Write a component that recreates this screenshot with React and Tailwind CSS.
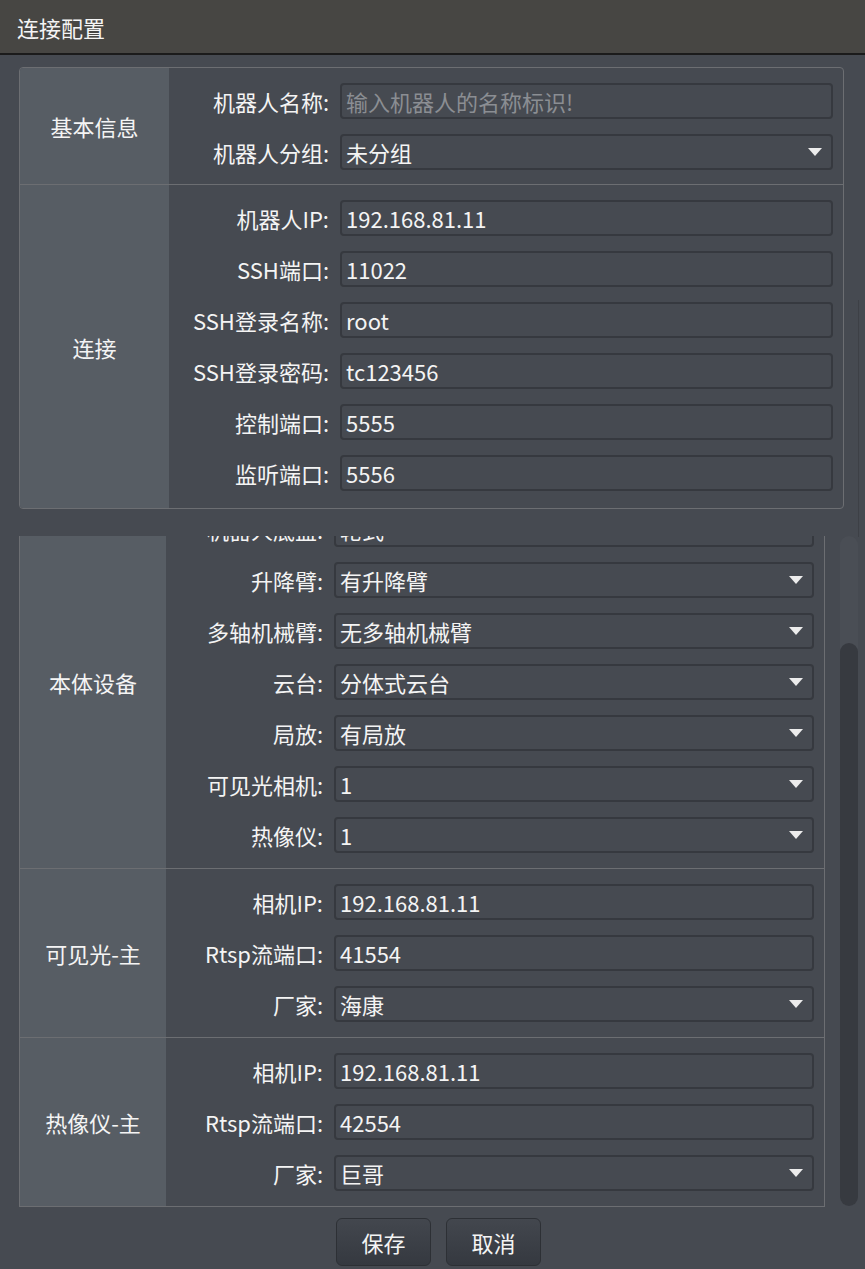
import React from "react";

const Arrow = () => (
  <svg width="14" height="8" viewBox="0 0 14 8" className="shrink-0">
    <path d="M0 0H14L7 8Z" fill="#ececec" />
  </svg>
);

function Field({ value, placeholder, select }) {
  return (
    <div className="flex-1 h-[36px] rounded-[4px] border-2 border-[#36393f] bg-[#464a51] flex items-center pl-[4px] pr-[9px]">
      <span className={"flex-1 leading-none whitespace-nowrap " + (placeholder ? "text-[#8b8e93]" : "text-[#f4f4f4]")}>
        {value || placeholder}
      </span>
      {select && <Arrow />}
    </div>
  );
}

function Row({ label, labelW, ...rest }) {
  return (
    <div className="flex items-center h-[36px] gap-[11px]">
      <div className="text-right leading-none whitespace-nowrap shrink-0" style={{ width: labelW }}>
        {label}
      </div>
      <Field {...rest} />
    </div>
  );
}

function Section({ title, rows, colW, labelW, pr, pt = 15, pb = 15, first }) {
  return (
    <div className={"flex " + (first ? "" : "border-t border-[#6c6e72]")}>
      <div className="shrink-0 bg-[#575d64] flex items-center justify-center leading-none" style={{ width: colW }}>
        {title}
      </div>
      <div className="flex-1 flex flex-col gap-[15px]" style={{ paddingTop: pt, paddingBottom: pb, paddingRight: pr }}>
        {rows.map((r, i) => (
          <Row key={i} labelW={labelW} {...r} />
        ))}
      </div>
    </div>
  );
}

export default function App() {
  return (
    <div className="w-[865px] h-[1269px] bg-[#464a51] overflow-hidden relative text-[22px] text-[#f4f4f4] font-['Noto_Sans_CJK_SC','Microsoft_YaHei',sans-serif]">
      {/* title bar */}
      <div className="h-[55px] bg-[#474643] border-b-2 border-[#1b1b1b] flex items-center pl-[17px] leading-none">
        连接配置
      </div>

      {/* edge of the outer scroll frame */}
      <div className="absolute left-[858px] top-[300px] w-px h-[237px] bg-[#3d4046]" />

      <div className="pl-[19px] pr-[7px] pt-[12px]">
        {/* basic info + connection */}
        <div className="w-[825px] border border-[#6c6e72] rounded-[4px] overflow-hidden">
          <Section
            first
            title="基本信息"
            colW={149}
            labelW={160}
            pr={10}
            pb={14}
            rows={[
              { label: "机器人名称:", placeholder: "输入机器人的名称标识!" },
              { label: "机器人分组:", value: "未分组", select: true },
            ]}
          />
          <Section
            title="连接"
            colW={149}
            labelW={160}
            pr={10}
            pb={17}
            rows={[
              { label: "机器人IP:", value: "192.168.81.11" },
              { label: "SSH端口:", value: "11022" },
              { label: "SSH登录名称:", value: "root" },
              { label: "SSH登录密码:", value: "tc123456" },
              { label: "控制端口:", value: "5555" },
              { label: "监听端口:", value: "5556" },
            ]}
          />
        </div>

        {/* scrolled device settings */}
        <div className="flex mt-[27px] gap-[15px]">
          <div className="w-[806px] h-[671px] overflow-hidden">
            <div className="mt-[-40px] border-x border-b border-[#6c6e72]">
              <Section
                first
                title="本体设备"
                colW={146}
                labelW={157}
                pr={10}
                rows={[
                  { label: "机器人底盘:", value: "轮式", select: true },
                  { label: "升降臂:", value: "有升降臂", select: true },
                  { label: "多轴机械臂:", value: "无多轴机械臂", select: true },
                  { label: "云台:", value: "分体式云台", select: true },
                  { label: "局放:", value: "有局放", select: true },
                  { label: "可见光相机:", value: "1", select: true },
                  { label: "热像仪:", value: "1", select: true },
                ]}
              />
              <Section
                title="可见光-主"
                colW={146}
                labelW={157}
                pr={10}
                rows={[
                  { label: "相机IP:", value: "192.168.81.11" },
                  { label: "Rtsp流端口:", value: "41554" },
                  { label: "厂家:", value: "海康", select: true },
                ]}
              />
              <Section
                title="热像仪-主"
                colW={146}
                labelW={157}
                pr={10}
                rows={[
                  { label: "相机IP:", value: "192.168.81.11" },
                  { label: "Rtsp流端口:", value: "42554" },
                  { label: "厂家:", value: "巨哥", select: true },
                ]}
              />
            </div>
          </div>
          {/* scrollbar */}
          <div className="w-[18px] h-[670px] rounded-full bg-[#4a4e55] flex flex-col justify-end">
            <div className="h-[563px] rounded-full bg-[#373a40]" />
          </div>
        </div>

        {/* actions */}
        <div className="flex justify-center gap-[15px] mt-[11px]">
          <button className="w-[95px] h-[48px] rounded-[6px] border border-[#2d3035] bg-gradient-to-b from-[#43474e] to-[#353940] text-[#f4f4f4] leading-none">
            保存
          </button>
          <button className="w-[95px] h-[48px] rounded-[6px] border border-[#2d3035] bg-gradient-to-b from-[#43474e] to-[#353940] text-[#f4f4f4] leading-none">
            取消
          </button>
        </div>
      </div>
    </div>
  );
}
